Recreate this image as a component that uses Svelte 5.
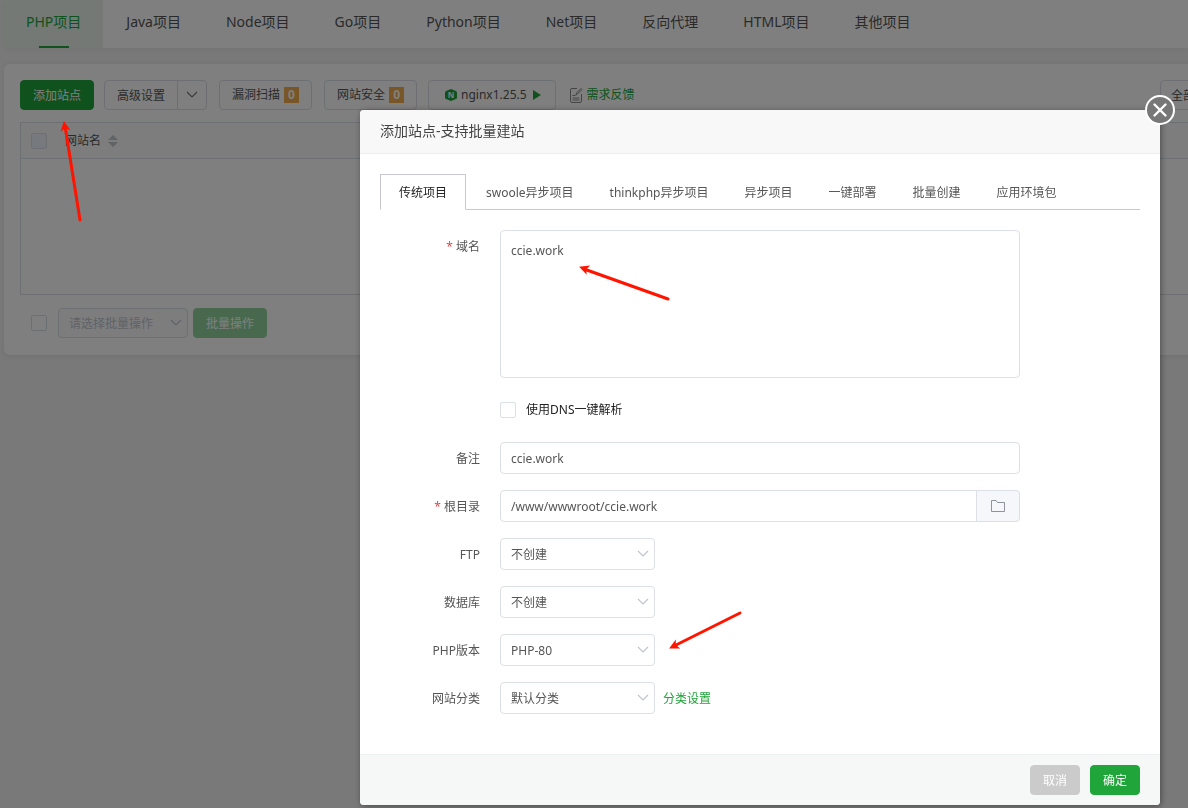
<script lang="ts">
	const projectTabs = [
		'PHP项目',
		'Java项目',
		'Node项目',
		'Go项目',
		'Python项目',
		'Net项目',
		'反向代理',
		'HTML项目',
		'其他项目'
	];
	const createTabs = [
		'传统项目',
		'swoole异步项目',
		'thinkphp异步项目',
		'异步项目',
		'一键部署',
		'批量创建',
		'应用环境包'
	];
	const selects = [
		{ id: 'ftp', label: 'FTP', options: ['不创建', '创建'] },
		{ id: 'database', label: '数据库', options: ['不创建', 'MySQL'] },
		{ id: 'php', label: 'PHP版本', options: ['PHP-80', 'PHP-74'] },
		{ id: 'category', label: '网站分类', options: ['默认分类'], link: '分类设置' }
	];

	let activeProject = $state('PHP项目');
	let activeCreate = $state('传统项目');
	let isOpen = $state(true);
	let domain = $state('ccie.work');
	let remark = $state('ccie.work');
	let path = $state('/www/wwwroot/ccie.work');
	let useDns = $state(false);
</script>

{#snippet chevron()}
	<svg class="chevron" width="12" height="8" viewBox="0 0 12 8" aria-hidden="true">
		<path d="M1 1l5 5 5-5" fill="none" stroke="currentColor" stroke-width="1.2" />
	</svg>
{/snippet}

<div class="page">
	<nav class="project-nav">
		{#each projectTabs as tab}
			<button class:active={tab === activeProject} onclick={() => (activeProject = tab)}>{tab}</button>
		{/each}
	</nav>

	<main class="card">
		<div class="toolbar">
			<button class="btn primary" onclick={() => (isOpen = true)}>添加站点</button>
			<div class="split">
				<button class="btn">高级设置</button>
				<button class="btn more" aria-label="更多">{@render chevron()}</button>
			</div>
			<div class="scans">
				<button class="btn">漏洞扫描<span class="count">0</span></button>
				<button class="btn">网站安全<span class="count">0</span></button>
			</div>
			<button class="btn server">
				<svg width="12" height="12" viewBox="0 0 12 12" aria-hidden="true">
					<path d="M6 0l5 2q1 .5 1 1.500v5q0 1-1 1.500L6 12l-5-2q-1-.5-1-1.500v-5Q0 2.500 1 2z" fill="#20a53a" />
					<text x="6" y="9" text-anchor="middle" font-size="8" font-weight="700" fill="#fff">N</text>
				</svg>
				nginx1.25.5
				<svg class="play" width="8" height="10" viewBox="0 0 8 10" aria-hidden="true">
					<path d="M0 0l8 5-8 5z" fill="#20a53a" />
				</svg>
			</button>
			<a class="feedback" href="#feedback">
				<svg width="13" height="15" viewBox="0 0 13 15" aria-hidden="true">
					<path
						d="M7 .5H2Q.5.500.5 2v11q0 1.500 1.500 1.500h8q1.500 0 1.500-1.500V6M2.500 7.500h3M2.500 10h7M2.500 12h7M6 7l.500-2L11 .500l1 1-4.500 4.500z"
						fill="none"
						stroke="#888"
					/>
				</svg>
				需求反馈
			</a>
			<select class="box filter" aria-label="分类筛选">
				<option>全部分类</option>
			</select>
		</div>

		<table>
			<thead>
				<tr>
					<th>
						<div class="head-cell">
							<input type="checkbox" class="check muted" aria-label="全选" disabled />
							<span>网站名</span>
							<svg width="10" height="12" viewBox="0 0 10 12" aria-hidden="true">
								<path d="M0 5l5-5 5 5zM0 7l5 5 5-5z" fill="#c0c4cc" />
							</svg>
						</div>
					</th>
				</tr>
			</thead>
			<tbody>
				<tr><td></td></tr>
			</tbody>
		</table>

		<div class="batch">
			<input type="checkbox" class="check" aria-label="选择全部" />
			<div class="select batch-select">
				<select class="box" aria-label="批量操作" disabled>
					<option>请选择批量操作</option>
				</select>
				{@render chevron()}
			</div>
			<button class="btn primary" disabled>批量操作</button>
		</div>
	</main>
</div>

{#if isOpen}
	<div class="mask">
		<div class="modal" role="dialog" aria-labelledby="modal-title">
			<button class="close" aria-label="关闭" onclick={() => (isOpen = false)}>
				<svg width="30" height="30" viewBox="0 0 30 30" aria-hidden="true">
					<circle cx="15" cy="15" r="14" fill="#777" stroke="#fff" stroke-width="2" />
					<path d="M9.500 9.500l11 11M20.500 9.500l-11 11" stroke="#fff" stroke-width="2.400" stroke-linecap="round" />
				</svg>
			</button>
			<h2 id="modal-title">添加站点-支持批量建站</h2>

			<div class="modal-body">
				<div class="create-nav">
					{#each createTabs as tab}
						<button class:active={tab === activeCreate} onclick={() => (activeCreate = tab)}>{tab}</button>
					{/each}
				</div>

				<form id="site-form" onsubmit={(e) => e.preventDefault()}>
					<label for="domain"><i>*</i> 域名</label>
					<textarea id="domain" class="box" bind:value={domain}></textarea>

					<label class="dns">
						<input type="checkbox" class="check" bind:checked={useDns} />
						使用DNS一键解析
					</label>

					<label for="remark">备注</label>
					<input id="remark" class="box" bind:value={remark} />

					<label for="path"><i>*</i> 根目录</label>
					<div class="path">
						<input id="path" class="box" bind:value={path} />
						<button type="button" aria-label="选择目录">
							<svg width="16" height="14" viewBox="0 0 16 14" aria-hidden="true">
								<path d="M1.500 1.500h4.500l1.500 2h7v9h-13z" fill="none" stroke="#8f939b" />
							</svg>
						</button>
					</div>

					{#each selects as item}
						<label for={item.id}>{item.label}</label>
						<div class="row">
							<div class="select">
								<select id={item.id} class="box">
									{#each item.options as option}
										<option>{option}</option>
									{/each}
								</select>
								{@render chevron()}
							</div>
							{#if item.link}
								<a href="#category">{item.link}</a>
							{/if}
						</div>
					{/each}
				</form>
			</div>

			<footer>
				<button class="btn cancel" onclick={() => (isOpen = false)}>取消</button>
				<button class="btn primary" form="site-form">确定</button>
			</footer>
		</div>
	</div>
{/if}

<!-- guide arrows drawn over the whole window -->
<svg class="arrows" aria-hidden="true">
	<defs>
		<marker id="head" markerUnits="userSpaceOnUse" markerWidth="12" markerHeight="12" refX="9" refY="5" orient="auto">
			<path d="M10 5L0 0l2.500 5L0 10z" fill="#ff1400" />
		</marker>
	</defs>
	<g stroke="#ff1400" stroke-width="3" stroke-linecap="round">
		<path d="M80 220L65 126" />
		<path d="M668 299L584 269" />
		<path d="M740 613L674 646" />
	</g>
	<g stroke="none" fill="none">
		<path d="M80 220L64 122" marker-end="url(#head)" />
		<path d="M668 299L580 267" marker-end="url(#head)" />
		<path d="M740 613L670 648" marker-end="url(#head)" />
	</g>
</svg>

<style>
	:global(body) {
		background: #f2f2f2;
	}
	.page,
	.mask {
		font-family: 'Noto Sans', 'Noto Sans CJK SC', sans-serif;
		font-size: 12px;
		line-height: 20px;
		color: #555;
	}
	.page *,
	.mask * {
		box-sizing: border-box;
	}
	button,
	input,
	select,
	textarea {
		margin: 0;
		font: inherit;
		color: inherit;
	}
	button {
		cursor: pointer;
	}
	a {
		color: #20a53a;
		text-decoration: none;
	}
	.page {
		min-height: 100vh;
		padding-left: 4px;
		overflow: hidden;
		box-sizing: border-box;
	}

	.project-nav {
		display: flex;
		gap: 1px;
		height: 48px;
		margin-bottom: 16px;
		overflow: hidden;
		background: #fff;
		border-radius: 0 0 0 6px;
		box-shadow: 0 1px 6px rgba(0, 0, 0, 0.06);
	}
	.project-nav button {
		display: flex;
		flex-direction: column;
		align-items: center;
		justify-content: space-between;
		padding: 12px 22px 0;
		border: none;
		background: none;
		font-size: 14px;
		white-space: nowrap;
	}
	.project-nav button::after {
		content: '';
		width: 30px;
		height: 2px;
	}
	.project-nav .active {
		background: #e9f3eb;
		color: #20a53a;
	}
	.project-nav .active::after {
		background: #20a53a;
	}

	/* the site list is wider than the window and runs off its right side */
	.card {
		margin-right: -108px;
		padding: 16px 16px 17px;
		background: #fff;
		border-radius: 6px;
		box-shadow: 0 1px 6px rgba(0, 0, 0, 0.08);
	}
	.toolbar {
		display: flex;
		gap: 10px;
		margin-bottom: 12px;
	}
	.btn {
		display: flex;
		align-items: center;
		justify-content: center;
		height: 30px;
		padding: 0 12px;
		border: 1px solid #dcdfe6;
		border-radius: 4px;
		background: #fff;
		white-space: nowrap;
	}
	.primary {
		padding-top: 2px;
		border-color: #20a53a;
		background: #20a53a;
		color: #fff;
	}
	.primary:disabled {
		border-color: #90d29d;
		background: #90d29d;
	}
	.split {
		display: flex;
	}
	.split .btn:first-child {
		padding-top: 2px;
		border-radius: 4px 0 0 4px;
	}
	.split .more {
		width: 30px;
		margin-left: -1px;
		padding: 0;
		border-radius: 0 4px 4px 0;
	}
	.more .chevron {
		margin: 0;
		color: #777;
	}
	.scans {
		display: flex;
		gap: 12px;
		margin: 0 1px 0 2px;
	}
	.count {
		width: 15px;
		height: 16px;
		margin-left: 4px;
		background: #f0ad4e;
		color: #fff;
		font-weight: 700;
		line-height: 16px;
	}
	.server {
		gap: 4px;
		padding: 0 14px 0 16px;
	}
	.play {
		margin-left: 2px;
	}
	.feedback {
		display: flex;
		align-items: center;
		gap: 4px;
		padding-left: 4px;
	}
	.filter {
		margin-left: auto;
	}

	table {
		width: 100%;
		border-collapse: collapse;
		border: 1px solid #dcdfe6;
	}
	th {
		height: 36px;
		padding: 0 10px;
		border-bottom: 1px solid #dcdfe6;
		background: #fafafa;
		font-weight: 400;
	}
	td {
		height: 136px;
		padding: 0;
	}
	.head-cell {
		display: flex;
		align-items: center;
	}
	.head-cell span {
		margin: 0 7px 0 18px;
	}
	.check {
		appearance: none;
		flex: none;
		width: 16px;
		height: 16px;
		border: 1px solid #dcdfe6;
		border-radius: 2px;
		background: #fff;
	}
	.check:checked {
		background: #20a53a;
	}
	.muted {
		background: #edf2fc;
	}
	.batch {
		display: flex;
		align-items: center;
		gap: 5px;
		margin-top: 13px;
		padding-left: 11px;
	}
	.batch .batch-select {
		width: 130px;
		margin-left: 6px;
	}
	.batch-select .box {
		height: 30px;
		background: #fbfbfc;
		color: #c0c4cc;
		opacity: 1;
	}

	.box {
		width: 100%;
		height: 32px;
		padding: 0 10px;
		border: 1px solid #dcdfe6;
		border-radius: 4px;
		outline: none;
		background: #fff;
		appearance: none;
	}
	.box:focus {
		border-color: #20a53a;
	}
	select.box {
		padding-top: 2px;
	}
	.toolbar .filter {
		width: 120px;
		height: 30px;
	}
	.select {
		display: grid;
		align-items: center;
		width: 155px;
	}
	.select > :global(*) {
		grid-area: 1 / 1;
	}
	.chevron {
		justify-self: end;
		margin-right: 6px;
		color: #c0c4cc;
		pointer-events: none;
	}

	.mask {
		position: fixed;
		inset: 0;
		display: flex;
		align-items: flex-start;
		justify-content: flex-end;
		padding: 110px 28px 0;
		background: rgba(0, 0, 0, 0.5);
	}
	.modal {
		position: relative;
		width: 800px;
		max-width: 100%;
		border-radius: 4px;
		background: #fff;
		box-shadow: 1px 1px 6px rgba(0, 0, 0, 0.4);
	}
	.close {
		position: absolute;
		top: -15px;
		right: -15px;
		padding: 0;
		border: none;
		background: none;
	}
	.close svg {
		display: block;
	}
	h2 {
		margin: 0;
		padding: 11px 20px 12px;
		border-bottom: 1px solid #eee;
		border-radius: 4px 4px 0 0;
		background: #f8f8f8;
		color: #444;
		font-size: 14px;
		font-weight: 400;
	}
	.modal-body {
		padding: 20px 20px 40px;
	}
	.create-nav {
		display: flex;
		height: 36px;
		margin-bottom: 20px;
		border-bottom: 1px solid #c8c9d0;
	}
	.create-nav button {
		height: 36px;
		padding: 2px 18px 0;
		border: none;
		background: none;
		white-space: nowrap;
	}
	.create-nav .active {
		margin-right: 2px;
		border: 1px solid #c8c9d0;
		border-bottom-color: #fff;
		background: #fff;
		color: #222;
	}
	form {
		display: grid;
		grid-template-columns: 100px minmax(0, 520px);
		gap: 16px 20px;
	}
	form > label {
		height: 32px;
		line-height: 34px;
		text-align: right;
	}
	form i {
		color: #f04040;
		font-style: normal;
	}
	textarea.box {
		display: block;
		height: 148px;
		padding: 10px;
		resize: none;
	}
	form .dns {
		grid-column: 2;
		display: flex;
		align-items: center;
		gap: 10px;
		color: #222;
	}
	.path,
	.row {
		display: flex;
		align-items: center;
	}
	.row {
		gap: 8px;
	}
	.row a {
		padding-top: 2px;
	}
	.path .box {
		border-radius: 4px 0 0 4px;
	}
	.path button {
		display: flex;
		flex: none;
		align-items: center;
		justify-content: center;
		width: 44px;
		height: 32px;
		margin-left: -1px;
		border: 1px solid #dcdfe6;
		border-radius: 0 4px 4px 0;
		background: #f5f7fa;
	}
	footer {
		display: flex;
		justify-content: flex-end;
		gap: 10px;
		padding: 10px 20px;
		border-top: 1px solid #edf1f1;
		border-radius: 0 0 4px 4px;
		background: #f6f8f8;
	}
	.cancel {
		padding-top: 2px;
		border-color: #cbcbcb;
		background: #cbcbcb;
		color: #fff;
	}

	.arrows {
		position: fixed;
		inset: 0;
		width: 100%;
		height: 100%;
		pointer-events: none;
	}
</style>
